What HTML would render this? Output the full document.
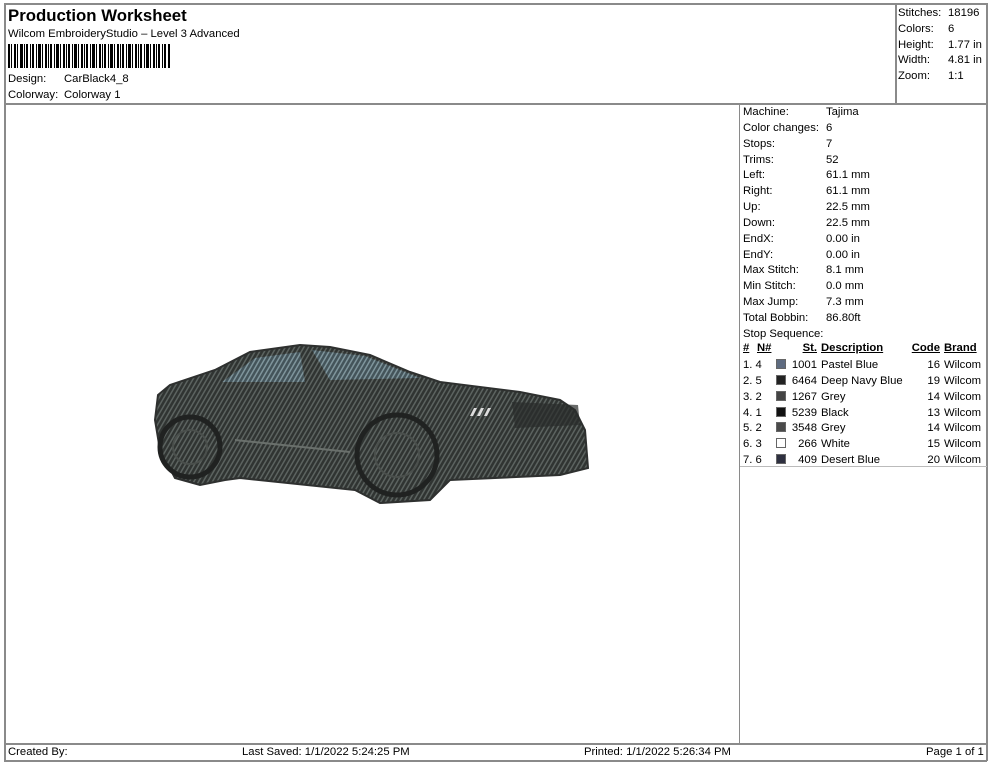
<!DOCTYPE html>
<html><head><meta charset="utf-8"><style>
*{margin:0;padding:0;box-sizing:border-box}
body{width:990px;height:762px;background:#fff;font-family:"Liberation Sans",Arial,sans-serif;color:#000;position:relative;overflow:hidden;font-size:11.3px}
.a{position:absolute;white-space:nowrap}
.ln{position:absolute;background:#8a8a8a}
.r{text-align:right}
.u{text-decoration:underline;font-weight:bold}
.sw{position:absolute;width:10px;height:10px;border:1px solid #666}
</style></head><body>
<div class="ln" style="left:4px;top:3px;width:983px;height:2px"></div>
<div class="ln" style="left:4px;top:3px;width:2px;height:758px"></div>
<div class="ln" style="left:986px;top:3px;width:2px;height:758px"></div>
<div class="ln" style="left:4px;top:103px;width:983px;height:2px"></div>
<div class="ln" style="left:895px;top:3px;width:2px;height:101px"></div>
<div class="ln" style="left:739px;top:104px;width:1px;height:640px"></div>
<div class="ln" style="left:4px;top:743px;width:983px;height:2px"></div>
<div class="ln" style="left:4px;top:760px;width:983px;height:2px"></div>
<div class="ln" style="left:740px;top:466px;width:247px;height:1px;background:#bbb"></div>

<div class="a" style="left:8px;top:6px;font-size:16.8px;font-weight:bold">Production Worksheet</div>
<div class="a" style="left:8px;top:28px">Wilcom EmbroideryStudio – Level 3 Advanced</div>
<svg class="a" style="left:8px;top:44px" width="162" height="24">
<g fill="#000">
<rect x="0" y="0" width="2" height="24"/><rect x="3" y="0" width="1" height="24"/><rect x="6" y="0" width="2" height="24"/><rect x="9" y="0" width="1" height="24"/><rect x="12" y="0" width="3" height="24"/><rect x="16" y="0" width="1" height="24"/><rect x="18" y="0" width="2" height="24"/><rect x="22" y="0" width="1" height="24"/><rect x="24" y="0" width="2" height="24"/><rect x="28" y="0" width="1" height="24"/><rect x="30" y="0" width="3" height="24"/><rect x="34" y="0" width="1" height="24"/><rect x="37" y="0" width="2" height="24"/><rect x="40" y="0" width="1" height="24"/><rect x="42" y="0" width="2" height="24"/><rect x="46" y="0" width="1" height="24"/><rect x="48" y="0" width="3" height="24"/><rect x="52" y="0" width="1" height="24"/><rect x="55" y="0" width="2" height="24"/><rect x="58" y="0" width="1" height="24"/><rect x="60" y="0" width="2" height="24"/><rect x="64" y="0" width="1" height="24"/><rect x="66" y="0" width="3" height="24"/><rect x="70" y="0" width="1" height="24"/><rect x="73" y="0" width="2" height="24"/><rect x="76" y="0" width="1" height="24"/><rect x="78" y="0" width="2" height="24"/><rect x="82" y="0" width="1" height="24"/><rect x="84" y="0" width="3" height="24"/><rect x="88" y="0" width="1" height="24"/><rect x="91" y="0" width="2" height="24"/><rect x="94" y="0" width="1" height="24"/><rect x="96" y="0" width="2" height="24"/><rect x="100" y="0" width="1" height="24"/><rect x="102" y="0" width="3" height="24"/><rect x="106" y="0" width="1" height="24"/><rect x="109" y="0" width="2" height="24"/><rect x="112" y="0" width="1" height="24"/><rect x="114" y="0" width="2" height="24"/><rect x="118" y="0" width="1" height="24"/><rect x="120" y="0" width="3" height="24"/><rect x="124" y="0" width="1" height="24"/><rect x="127" y="0" width="2" height="24"/><rect x="130" y="0" width="1" height="24"/><rect x="132" y="0" width="2" height="24"/><rect x="136" y="0" width="1" height="24"/><rect x="138" y="0" width="3" height="24"/><rect x="142" y="0" width="1" height="24"/><rect x="145" y="0" width="2" height="24"/><rect x="148" y="0" width="1" height="24"/><rect x="150" y="0" width="2" height="24"/><rect x="154" y="0" width="1" height="24"/><rect x="156" y="0" width="2" height="24"/><rect x="160" y="0" width="2" height="24"/>
</g></svg>
<div class="a" style="left:8px;top:73px">Design:</div><div class="a" style="left:64px;top:73px">CarBlack4_8</div>
<div class="a" style="left:8px;top:89px">Colorway:</div><div class="a" style="left:64px;top:89px">Colorway 1</div>

<div class="a" style="left:898px;top:6px;line-height:15.8px">Stitches:<br>Colors:<br>Height:<br>Width:<br>Zoom:</div>
<div class="a" style="left:948px;top:6px;line-height:15.8px">18196<br>6<br>1.77 in<br>4.81 in<br>1:1</div>

<div class="a" style="left:743px;top:105px;line-height:15.85px">Machine:<br>Color changes:<br>Stops:<br>Trims:<br>Left:<br>Right:<br>Up:<br>Down:<br>EndX:<br>EndY:<br>Max Stitch:<br>Min Stitch:<br>Max Jump:<br>Total Bobbin:<br>Stop Sequence:</div>
<div class="a" style="left:826px;top:105px;line-height:15.85px">Tajima<br>6<br>7<br>52<br>61.1 mm<br>61.1 mm<br>22.5 mm<br>22.5 mm<br>0.00 in<br>0.00 in<br>8.1 mm<br>0.0 mm<br>7.3 mm<br>86.80ft</div>

<div class="a u" style="left:743px;top:342px">#</div>
<div class="a u" style="left:757px;top:342px">N#</div>
<div class="a u r" style="left:790px;top:342px;width:27px">St.</div>
<div class="a u" style="left:821px;top:342px">Description</div>
<div class="a u r" style="left:900px;top:342px;width:40px">Code</div>
<div class="a u" style="left:944px;top:342px">Brand</div>
<div class="a" style="left:743px;top:358px;line-height:15.85px">1. 4<br>2. 5<br>3. 2<br>4. 1<br>5. 2<br>6. 3<br>7. 6</div>
<div class="a r" style="left:780px;top:358px;width:37px;line-height:15.85px">1001<br>6464<br>1267<br>5239<br>3548<br>266<br>409</div>
<div class="a" style="left:821px;top:358px;line-height:15.85px">Pastel Blue<br>Deep Navy Blue<br>Grey<br>Black<br>Grey<br>White<br>Desert Blue</div>
<div class="a r" style="left:900px;top:358px;width:40px;line-height:15.85px">16<br>19<br>14<br>13<br>14<br>15<br>20</div>
<div class="a" style="left:944px;top:358px;line-height:15.85px">Wilcom<br>Wilcom<br>Wilcom<br>Wilcom<br>Wilcom<br>Wilcom<br>Wilcom</div>
<div class="sw" style="left:776px;top:359px;background:#5e6b80"></div>
<div class="sw" style="left:776px;top:375px;background:#222"></div>
<div class="sw" style="left:776px;top:391px;background:#444"></div>
<div class="sw" style="left:776px;top:407px;background:#111"></div>
<div class="sw" style="left:776px;top:422px;background:#4a4a4a"></div>
<div class="sw" style="left:776px;top:438px;background:#fff"></div>
<div class="sw" style="left:776px;top:454px;background:#2e3040"></div>

<svg class="a" style="left:0;top:0" width="740" height="740">
<defs><pattern id="p" width="4" height="4" patternUnits="userSpaceOnUse" patternTransform="rotate(30)">
<rect width="4" height="4" fill="#303432"/><rect width="1.5" height="4" fill="#5c6360"/></pattern>
<pattern id="w" width="4" height="4" patternUnits="userSpaceOnUse" patternTransform="rotate(30)">
<rect width="4" height="4" fill="#44545a"/><rect width="1.5" height="4" fill="#7f959c"/></pattern></defs>
<path d="M158,395 L170,385 L215,370 L250,352 L300,345 L330,347 L370,355 L410,372 L440,382 L520,392 L560,400 L575,410 L585,430 L588,468 L560,475 L450,480 L430,500 L380,503 L355,490 L240,478 L225,480 L200,485 L175,478 L160,450 L155,420 Z" fill="url(#p)" stroke="#2e302f" stroke-width="2"/>
<path d="M222,382 L255,358 L300,352 L305,382 Z" fill="url(#w)"/>
<path d="M312,350 L365,356 L420,378 L330,380 Z" fill="url(#w)"/>
<circle cx="397" cy="455" r="40" fill="url(#p)" stroke="#202221" stroke-width="5"/>
<circle cx="397" cy="455" r="22" fill="none" stroke="#4a4f4c" stroke-width="2"/>
<circle cx="190" cy="447" r="30" fill="url(#p)" stroke="#202221" stroke-width="5"/>
<circle cx="190" cy="447" r="17" fill="none" stroke="#4a4f4c" stroke-width="2"/>
<path d="M512,402 L578,405 L580,425 L515,428 Z" fill="#2a2c2b" opacity="0.7"/>
<path d="M470,416 l4,-8 h3 l-4,8z M477,416 l4,-8 h3 l-4,8z M484,416 l4,-8 h3 l-4,8z" fill="#ddd"/>
<path d="M235,440 L350,452" stroke="#6a706c" stroke-width="2"/>
</svg>

<div class="a" style="left:8px;top:746px">Created By:</div>
<div class="a" style="left:242px;top:746px">Last Saved: 1/1/2022 5:24:25 PM</div>
<div class="a" style="left:584px;top:746px">Printed: 1/1/2022 5:26:34 PM</div>
<div class="a" style="left:926px;top:746px">Page 1 of 1</div>
</body></html>
